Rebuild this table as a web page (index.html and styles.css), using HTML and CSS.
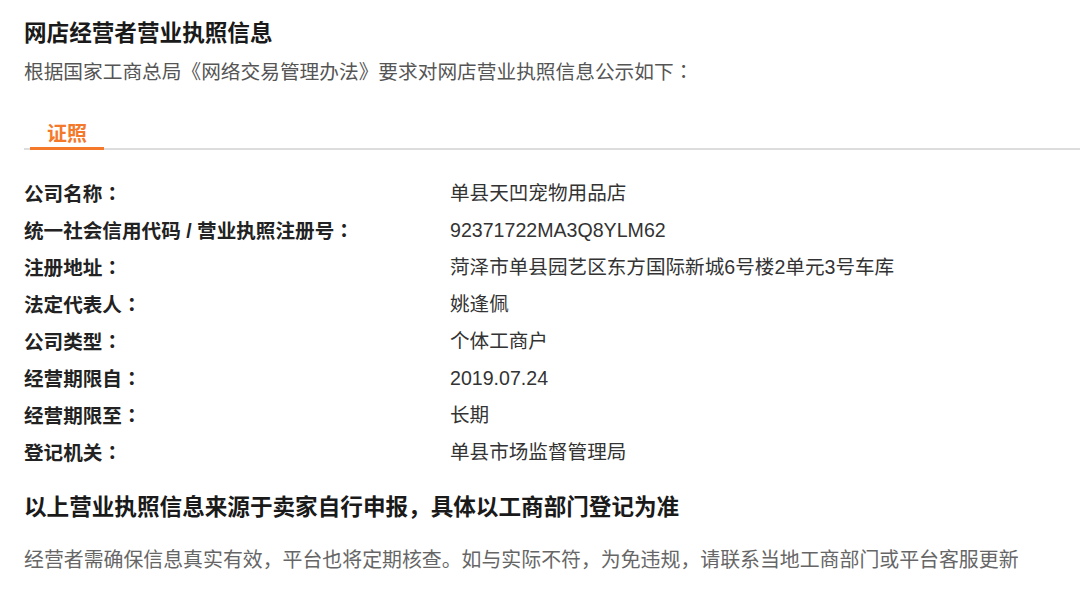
FILE: index.html
```html
<!DOCTYPE html>
<html lang="zh-CN">
<head>
<meta charset="utf-8">
<title>网店经营者营业执照信息</title>
<link rel="stylesheet" href="styles.css">
</head>
<body>
<main class="page">
  <h1 class="title">网店经营者营业执照信息</h1>
  <p class="subtitle">根据国家工商总局《网络交易管理办法》要求对网店营业执照信息公示如下<span class="colon" lang="zh-TW">：</span></p>
  <div class="tabs">
    <span class="tab active">证照</span>
  </div>
  <dl class="info">
    <div class="row"><dt>公司名称<span class="colon" lang="zh-TW">：</span></dt><dd>单县天凹宠物用品店</dd></div>
    <div class="row"><dt>统一社会信用代码 / 营业执照注册号<span class="colon" lang="zh-TW">：</span></dt><dd>92371722MA3Q8YLM62</dd></div>
    <div class="row"><dt>注册地址<span class="colon" lang="zh-TW">：</span></dt><dd>菏泽市单县园艺区东方国际新城6号楼2单元3号车库</dd></div>
    <div class="row"><dt>法定代表人<span class="colon" lang="zh-TW">：</span></dt><dd>姚逢佩</dd></div>
    <div class="row"><dt>公司类型<span class="colon" lang="zh-TW">：</span></dt><dd>个体工商户</dd></div>
    <div class="row"><dt>经营期限自<span class="colon" lang="zh-TW">：</span></dt><dd>2019.07.24</dd></div>
    <div class="row"><dt>经营期限至<span class="colon" lang="zh-TW">：</span></dt><dd>长期</dd></div>
    <div class="row"><dt>登记机关<span class="colon" lang="zh-TW">：</span></dt><dd>单县市场监督管理局</dd></div>
  </dl>
  <h2 class="notice">以上营业执照信息来源于卖家自行申报，具体以工商部门登记为准</h2>
  <p class="footnote">经营者需确保信息真实有效，平台也将定期核查。如与实际不符，为免违规，请联系当地工商部门或平台客服更新</p>
</main>
</body>
</html>
```

FILE: styles.css
```css
html, body {
  margin: 0;
  padding: 0;
  background: #ffffff;
}

body {
  font-family: "Noto Sans CJK SC", "Microsoft YaHei", sans-serif;
  color: #333333;
}

.page {
  padding: 17px 0 0 24px;
}

.colon {
  font-family: "Noto Sans CJK TC", "Noto Sans CJK SC", sans-serif;
}

.title {
  margin: 0;
  font-size: 22.6px;
  line-height: 30px;
  font-weight: 700;
  color: #1a1a1a;
}

.subtitle {
  margin: 10px 0 0;
  font-size: 19.7px;
  line-height: 28px;
  color: #555555;
}

.tabs {
  margin-top: 34px;
  display: flex;
  border-bottom: 2px solid #dddddd;
}

.tab {
  font-size: 20px;
  line-height: 28px;
  font-weight: 700;
  padding: 0 17px;
  margin-left: 6px;
  margin-bottom: -2px;
}

.tab.active {
  color: #f5792a;
  border-bottom: 3px solid #f5792a;
}

.info {
  margin: 24px 0 0;
  display: flex;
  flex-direction: column;
}

.row {
  display: grid;
  grid-template-columns: 426px 1fr;
  align-items: center;
  height: 37.1px;
  font-size: 19.6px;
  font-family: "Liberation Sans", "Noto Sans CJK SC", sans-serif;
}

.row dt,
.row dd {
  line-height: 28px;
  height: 28px;
}

.row dt {
  font-weight: 700;
  color: #222222;
}

.row dd {
  margin: 0;
  color: #333333;
}

.notice {
  margin: 19px 0 0;
  font-size: 22.6px;
  line-height: 32px;
  font-weight: 700;
  color: #1a1a1a;
}

.footnote {
  margin: 23px 0 0;
  font-size: 19.9px;
  line-height: 28px;
  color: #666666;
}
```
